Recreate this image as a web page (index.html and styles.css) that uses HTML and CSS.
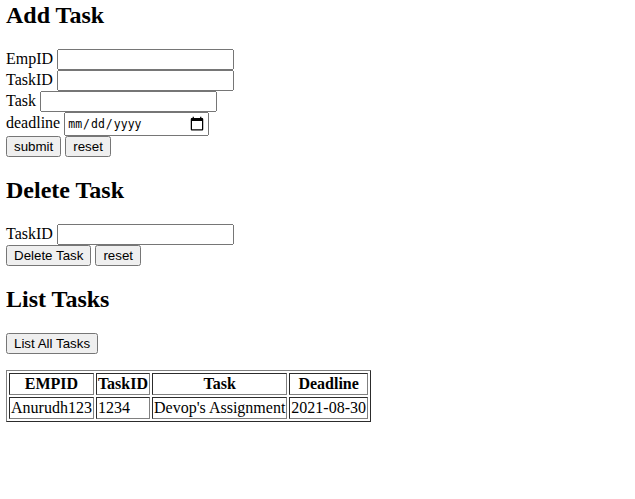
FILE: index.html
```html
<!DOCTYPE html>
<html lang="en">
<head>
<meta charset="utf-8">
<title>Tasks</title>
<link rel="stylesheet" href="styles.css">
</head>
<body>
<h2>Add Task</h2>
<form>
<div class="row">EmpID <input type="text"></div>
<div class="row">TaskID <input type="text"></div>
<div class="row">Task <input type="text"></div>
<div class="row">deadline <input type="date"></div>
<div class="row"><button type="button">submit</button> <button type="reset">reset</button></div>
</form>
<h2>Delete Task</h2>
<form>
<div class="row">TaskID <input type="text"></div>
<div class="row"><button type="button">Delete Task</button> <button type="reset">reset</button></div>
</form>
<h2>List Tasks</h2>
<form>
<div class="row"><button type="button">List All Tasks</button></div>
</form>
<table border="1">
<tr><th>EMPID</th><th>TaskID</th><th>Task</th><th>Deadline</th></tr>
<tr><td>Anurudh123</td><td>1234</td><td>Devop's Assignment</td><td>2021-08-30</td></tr>
</table>
</body>
</html>
```
FILE: styles.css
```css
body {
  margin: 2px 6px 0;
  font-family: "Liberation Serif", serif;
  font-size: 16px;
  color: #000;
  background: #fff;
}
h2 { margin: 20px 0; font-size: 24px; line-height: 27px; }
h2:first-child { margin-top: 0; }
input, button { font-family: "Liberation Sans", sans-serif; font-size: 13.333px; }
input { box-sizing: border-box; width: 177px; }
input[type="date"] {
  width: 145px;
  height: 24px;
  font-family: "DejaVu Sans Mono", monospace;
  font-size: 11.5px;
}
input[type="date"]::-webkit-calendar-picker-indicator {
  width: 16px;
  height: 16px;
  padding: 0 2px;
}
table { margin-top: 16px; }
```
